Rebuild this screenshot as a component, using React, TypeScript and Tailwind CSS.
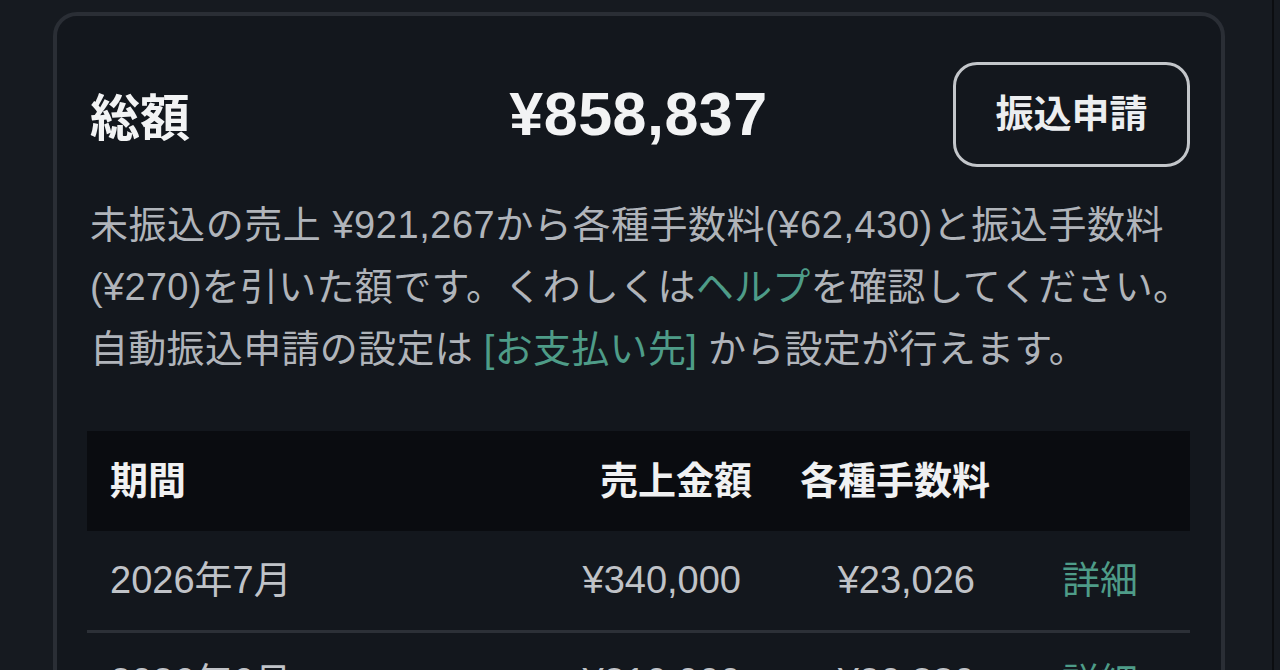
import React from 'react';

type Row = { period: string; sales: string; fee: string };

const rows: Row[] = [
  { period: '2026年7月', sales: '¥340,000', fee: '¥23,026' },
  { period: '2026年6月', sales: '¥310,000', fee: '¥20,380' },
];

const App: React.FC = () => {
  return (
    <div className="flex h-[670px] w-[1280px] overflow-hidden bg-[#161a20] font-['Liberation_Sans','Noto_Sans_CJK_JP',sans-serif]">
      <div className="w-[1272px] pl-[53px] pt-[12px]">
        <div className="w-[1172px] min-h-[700px] rounded-[24px] border-[4px] border-[#2a2e35] bg-[#13171d] pl-[30px] pr-[31px] pt-[46px]">
          <div className="grid h-[105px] grid-cols-[1fr_auto_1fr] items-center">
            <h1 className="pl-[3px] pt-[8px] text-[50px] font-bold leading-none text-[#f2f3f4]">総額</h1>
            <div className="text-[61px] font-bold leading-none tracking-[0.5px] text-[#f2f3f4]">¥858,837</div>
            <div className="flex justify-end">
              <button className="h-[105px] w-[237px] rounded-[24px] border-[3px] border-[#c3c6ca] text-[38px] font-bold text-[#eceef0]">
                振込申請
              </button>
            </div>
          </div>

          <p className="mt-[27px] pl-[3px] text-[38px] leading-[62px] tracking-[0.3px] text-[#b0b4ba] whitespace-nowrap">
            <span className="tracking-[0.55px]">未振込の売上 ¥921,267から各種手数料(¥62,430)と振込手数料</span>
            <br />
            (¥270)を引いた額です。くわしくは<span className="text-[#4e9c88]">ヘルプ</span>を確認してください。
            <br />
            自動振込申請の設定は <span className="text-[#4e9c88]">[お支払い先]</span> から設定が行えます。
          </p>

          <div className="mt-[51px]">
            <div className="flex h-[100px] items-center bg-[#0a0c10] text-[38px] font-bold text-[#f0f1f2]">
              <div className="flex-1 pl-[23px]">期間</div>
              <div className="w-[200px] text-right">売上金額</div>
              <div className="w-[238px] pl-[48px]">各種手数料</div>
              <div className="w-[200px]"></div>
            </div>
            {rows.map((row, i) => (
              <div
                key={i}
                className="flex h-[102px] items-center border-b-[3px] border-[#2c3037] text-[38px] text-[#c0c3c8]"
              >
                <div className="flex-1 pl-[23px]">{row.period}</div>
                <div className="w-[200px] pr-[11px] text-right">{row.sales}</div>
                <div className="w-[238px] pr-[15px] text-right">{row.fee}</div>
                <div className="w-[200px] pl-[72px] text-[#4e9c88]">詳細</div>
              </div>
            ))}
          </div>
        </div>
      </div>
      <div className="w-[2px] bg-[#0b0d10]" />
      <div className="flex-1" />
    </div>
  );
};

export default App;
